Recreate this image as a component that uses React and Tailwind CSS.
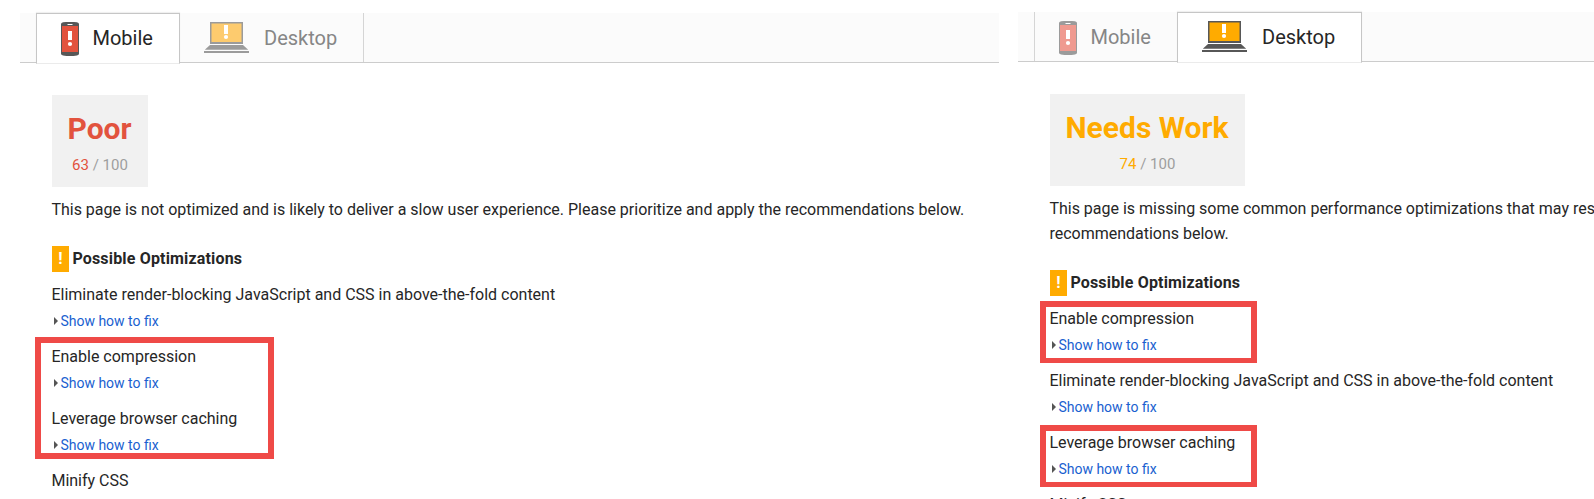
function Phone({ faded }) {
  const body = faded ? "#9b9b9b" : "#575757";
  const screen = faded ? "#ef9a90" : "#e2533e";
  return (
    <svg width="18" height="34" viewBox="0 0 18 34" className="block shrink-0">
      <path d="M2 .2Q9-.4 16 .2Q18 .6 18 2V32Q18 33 16 33.4Q9 34.4 2 33.4Q0 33 0 32V2Q0 .6 2 .2Z" fill={body} />
      <rect x="6.5" y="2" width="5" height="1" fill="#fff" />
      <rect x="1" y="4" width="16" height="26" fill={screen} />
      <rect x="7" y="9" width="4" height="9" fill="#fff" />
      <circle cx="9" cy="22" r="2.1" fill="#fff" />
    </svg>
  );
}

function Laptop({ faded }) {
  const body = faded ? "#9b9b9b" : "#575757";
  const screen = faded ? "#fdcb6e" : "#ffab00";
  return (
    <svg width="45" height="31" viewBox="0 0 45 31" className="block shrink-0">
      <rect x="6" y="0" width="33" height="22" fill={body} />
      <rect x="7.5" y="1.5" width="30" height="18.5" fill={screen} />
      <rect x="20" y="3" width="4" height="9" fill="#fff" />
      <circle cx="22" cy="15" r="2.1" fill="#fff" />
      <path d="M6 23H39L44.2 27.8H.8Z" fill={body} />
      <rect x="0" y="29" width="45" height="2" fill={body} />
    </svg>
  );
}

function Tabs({ active }) {
  const mobile = active === "mobile";
  const on = "bg-white text-[#262626] border-x border-t border-[#c6c6c6] border-b border-b-[#ebebeb] h-[51px] shadow-[0_-1px_1px_rgba(0,0,0,0.06)] relative";
  const off = "text-[#868686] h-[49px]";
  return (
    <div className="flex h-[50px] items-start border-b border-[#cccccc] bg-[#fbfbfb] pl-4 text-xl leading-[24px]">
      <div className={`flex w-36 ${mobile ? on : off + " border-l border-[#d5d5d5]"}`}>
        <div className={`flex items-start ${mobile ? "pl-6 pt-2" : "pl-6 pt-[9px]"}`}>
          <Phone faded={!mobile} />
          <span className="ml-[13.5px] mt-[4px]">Mobile</span>
        </div>
      </div>
      <div className={`flex ${mobile ? "w-[184px] " + off + " border-r border-[#d5d5d5]" : "-ml-px w-[185px] " + on}`}>
        <div className={`flex items-start ${mobile ? "pl-6 pt-[9px]" : "pl-6 pt-2"}`}>
          <Laptop faded={mobile} />
          <span className="ml-[15px] mt-[4px]">Desktop</span>
        </div>
      </div>
    </div>
  );
}

function Score({ label, value, tone, width }) {
  return (
    <div className={`flex h-[92px] flex-col items-center bg-[#f1f1f1] pt-[15px] ${width} ${tone}`}>
      <div className="-ml-px text-[30px] font-bold leading-[38px]">{label}</div>
      <div className="mt-[7px] text-[15px] leading-[20px] text-[#9e9e9e]">
        <span className={tone}>{value}</span> / 100
      </div>
    </div>
  );
}

function Rule({ title }) {
  return (
    <div className="h-[62px]">
      <div className="-ml-[0.6px] h-[26px] leading-[26px]">{title}</div>
      <div className="flex h-[26px] items-center pl-[2px] text-sm leading-[26px] text-[#1a5fd0]">
        <svg width="4" height="8" viewBox="0 0 4 8" className="mr-[2.4px]">
          <path d="M0 0L4 4L0 8Z" fill="#555" />
        </svg>
        Show how to fix
      </div>
    </div>
  );
}

function Heading() {
  return (
    <div className="flex h-[26px] items-center font-bold leading-[26px] tracking-[0.17px]">
      <span className="mr-[3.4px] h-[26px] w-[17px] text-center leading-[25px] text-white bg-[#ffab00]">!</span>
      Possible Optimizations
    </div>
  );
}

export default function App() {
  return (
    <div className="flex h-[499px] w-[1594px] overflow-hidden bg-white pl-5 font-['Roboto',sans-serif] text-base text-[#262626]">
      <section className="w-[979px] shrink-0 pt-[13px]">
        <Tabs active="mobile" />
        <div className="relative pl-8 pt-8">
          <Score label="Poor" value="63" tone="text-[#e2533e]" width="w-24" />
          <p className="-ml-[0.6px] mt-[10px] whitespace-nowrap leading-[25px] tracking-[-0.006px]">
            This page is not optimized and is likely to deliver a slow user experience. Please prioritize and apply the recommendations below.
          </p>
          <div className="mt-6"><Heading /></div>
          <div className="mt-[10px]">
            <Rule title="Eliminate render-blocking JavaScript and CSS in above-the-fold content" />
            <Rule title="Enable compression" />
            <Rule title="Leverage browser caching" />
            <div className="-ml-[0.6px] h-[26px] leading-[26px]">Minify CSS</div>
          </div>
          <div className="absolute left-[15px] top-[274px] h-[122px] w-[239px] border-[6px] border-[#ef4a47]" />
        </div>
      </section>
      <section className="ml-[19px] w-[980px] shrink-0 pt-3">
        <Tabs active="desktop" />
        <div className="relative pl-8 pt-8">
          <Score label="Needs Work" value="74" tone="text-[#ffab00]" width="w-[195px]" />
          <p className="-ml-[0.6px] mt-[10px] whitespace-nowrap leading-[25px] tracking-[-0.006px]">
            This page is missing some common performance optimizations that may res
            <br />
            recommendations below.
          </p>
          <div className="mt-6"><Heading /></div>
          <div className="mt-[10px]">
            <Rule title="Enable compression" />
            <Rule title="Eliminate render-blocking JavaScript and CSS in above-the-fold content" />
            <Rule title="Leverage browser caching" />
            <Rule title="Minify CSS" />
          </div>
          <div className="absolute left-[22px] top-[239px] h-[62px] w-[217px] border-[6px] border-b-[5px] border-[#ef4a47]" />
          <div className="absolute left-[22px] top-[363px] h-[62px] w-[217px] border-[6px] border-b-[5px] border-[#ef4a47]" />
        </div>
      </section>
    </div>
  );
}
